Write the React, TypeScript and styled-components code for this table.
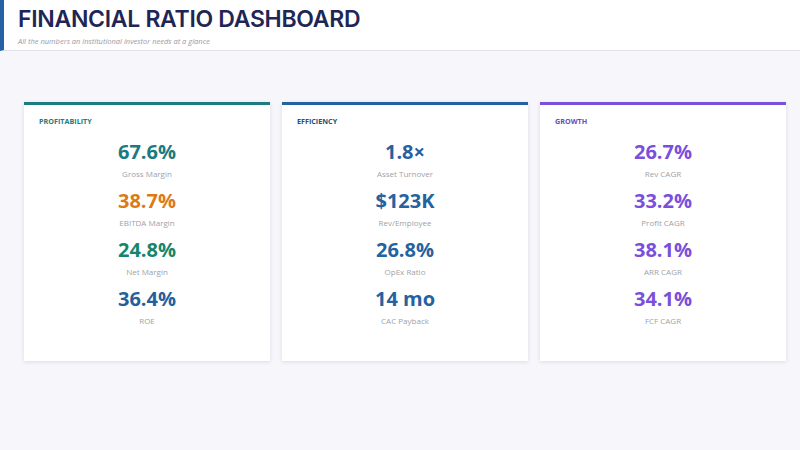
import styled, { createGlobalStyle } from 'styled-components';

const GlobalStyle = createGlobalStyle`
  html, body {
    margin: 0;
    padding: 0;
    background: #f6f6fb;
  }
  body {
    font-family: 'Open Sans', 'Noto Sans', sans-serif;
  }
`;

type Metric = { value: string; label: string; color: string };
type Group = { title: string; accent: string; titleColor: string; metrics: Metric[] };

const groups: Group[] = [
  {
    title: 'PROFITABILITY',
    accent: '#1b7c82',
    titleColor: '#1b7c82',
    metrics: [
      { value: '67.6%', label: 'Gross Margin', color: '#1a7a80' },
      { value: '38.7%', label: 'EBITDA Margin', color: '#dd7a17' },
      { value: '24.8%', label: 'Net Margin', color: '#16856a' },
      { value: '36.4%', label: 'ROE', color: '#255f9c' },
    ],
  },
  {
    title: 'EFFICIENCY',
    accent: '#2562a0',
    titleColor: '#254f7e',
    metrics: [
      { value: '1.8×', label: 'Asset Turnover', color: '#2562a0' },
      { value: '$123K', label: 'Rev/Employee', color: '#2562a0' },
      { value: '26.8%', label: 'OpEx Ratio', color: '#2562a0' },
      { value: '14 mo', label: 'CAC Payback', color: '#2562a0' },
    ],
  },
  {
    title: 'GROWTH',
    accent: '#7a4fdc',
    titleColor: '#6a4bc0',
    metrics: [
      { value: '26.7%', label: 'Rev CAGR', color: '#7a4fdc' },
      { value: '33.2%', label: 'Profit CAGR', color: '#7a4fdc' },
      { value: '38.1%', label: 'ARR CAGR', color: '#7a4fdc' },
      { value: '34.1%', label: 'FCF CAGR', color: '#7a4fdc' },
    ],
  },
];

const App = () => {
  return (
    <>
      <GlobalStyle />
      <Page>
        <Header>
          <Title>FINANCIAL RATIO DASHBOARD</Title>
          <Subtitle>All the numbers an institutional investor needs at a glance</Subtitle>
        </Header>
        <CardRow>
          {groups.map((g) => (
            <Card key={g.title} $accent={g.accent}>
              <CardTitle $color={g.titleColor}>{g.title}</CardTitle>
              <MetricList>
                {g.metrics.map((m) => (
                  <MetricItem key={m.label}>
                    <MetricValue $color={m.color}>{m.value}</MetricValue>
                    <MetricLabel>{m.label}</MetricLabel>
                  </MetricItem>
                ))}
              </MetricList>
            </Card>
          ))}
        </CardRow>
      </Page>
    </>
  );
};

export default App;

const Page = styled.div`
  width: 800px;
  height: 450px;
  background: #f6f6fb;
  overflow: hidden;
`;

const Header = styled.div`
  height: 51px;
  box-sizing: border-box;
  background: #ffffff;
  border-left: 4px solid #2461a6;
  border-bottom: 1px solid #dfe2ea;
  padding: 5px 0 0 14px;
`;

const Title = styled.h1`
  margin: 0;
  font-family: Inter, 'Liberation Sans', sans-serif;
  font-size: 23px;
  font-weight: 600;
  letter-spacing: -0.3px;
  line-height: 28px;
  color: #1f2656;
`;

const Subtitle = styled.div`
  margin-top: 3px;
  font-size: 7.5px;
  font-style: italic;
  color: #9a9aa8;
`;

const CardRow = styled.div`
  display: flex;
  gap: 12px;
  padding: 51px 14px 0 24px;
`;

const Card = styled.div<{ $accent: string }>`
  width: 246px;
  height: 259px;
  box-sizing: border-box;
  background: #ffffff;
  border-top: 3px solid ${(p) => p.$accent};
  box-shadow: 0 1px 4px rgba(30, 40, 80, 0.12);
  padding: 10px 15px 0;
`;

const CardTitle = styled.div<{ $color: string }>`
  font-size: 7.2px;
  font-weight: 700;
  color: ${(p) => p.$color};
  line-height: 12px;
`;

const MetricList = styled.div`
  display: flex;
  flex-direction: column;
  align-items: center;
  margin-top: 11px;
  gap: 6px;
`;

const MetricItem = styled.div`
  display: flex;
  flex-direction: column;
  align-items: center;
`;

const MetricValue = styled.div<{ $color: string }>`
  font-size: 20px;
  font-weight: 700;
  line-height: 28px;
  color: ${(p) => p.$color};
`;

const MetricLabel = styled.div`
  margin-top: 1px;
  font-size: 8px;
  line-height: 14px;
  color: #a09fa8;
`;
